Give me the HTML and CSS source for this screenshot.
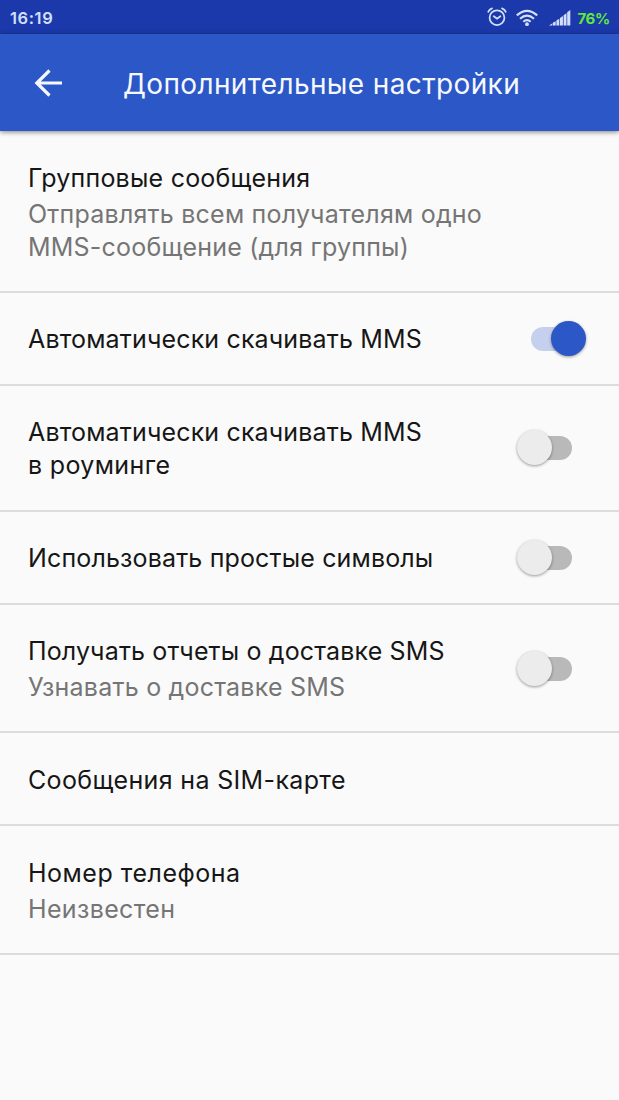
FILE: index.html
```html
<!DOCTYPE html>
<html lang="ru">
<head>
<meta charset="utf-8">
<title>Дополнительные настройки</title>
<link rel="stylesheet" href="styles.css">
</head>
<body>
<header class="statusbar">
  <span class="clock">16:19</span>
  <svg class="alarm" width="20" height="20" viewBox="0 0 20 20" fill="none" stroke="currentColor" stroke-width="1.7" stroke-linecap="round"><circle cx="10" cy="10.7" r="7.4"/><path d="M6.8 9.2l3.2 2.4 3.4-2.4M1.2 4.8Q2.3 2.3 5 1.4M18.8 4.8Q17.7 2.3 15 1.4"/></svg>
  <svg class="wifi" width="22" height="18" viewBox="0 0 22 18" fill="none" stroke="currentColor" stroke-width="2.1"><path d="M.8 6.4Q11-2.8 21.2 6.4M4 9.7Q11 3.5 18 9.7M7.3 12.8Q11 9.6 14.7 12.8"/><circle cx="11" cy="15.2" r="1.9" fill="currentColor" stroke="none"/></svg>
  <svg class="signal" width="22" height="16" viewBox="0 0 22 16" fill="currentColor"><path d="M0 15.5l3.2-2v2zM3.8 12.7l2.9-1.5v4.3H3.8zM7.4 10.4l2.9-1.7v6.8H7.4zM11 7.9l2.9-1.9v9.5H11zM14.6 5.3l2.9-2v12.2h-2.9zM18.2 2.2L21.3 0v15.5h-3.1z"/></svg>
  <span class="battery">76%</span>
</header>
<nav class="appbar">
  <svg class="back" width="28" height="28" viewBox="0 0 28 28" fill="none" stroke="currentColor" stroke-width="3.2"><path d="M28 14H3M15.5 1.5L2.8 14l12.7 12.5"/></svg>
  <h1 class="heading">Дополнительные настройки</h1>
</nav>
<main class="list">
  <section class="row"><div class="text"><p class="title">Групповые сообщения</p><p class="sub">Отправлять всем получателям одно<br>MMS-сообщение (для группы)</p></div></section>
  <section class="row"><div class="text"><p class="title tight">Автоматически скачивать MMS</p></div><span class="switch on"></span></section>
  <section class="row"><div class="text"><p class="title tight">Автоматически скачивать MMS<br><span class="wide">в роуминге</span></p></div><span class="switch"></span></section>
  <section class="row"><div class="text"><p class="title tight">Использовать простые символы</p></div><span class="switch"></span></section>
  <section class="row"><div class="text"><p class="title tight">Получать отчеты о доставке SMS</p><p class="sub">Узнавать о доставке SMS</p></div><span class="switch"></span></section>
  <section class="row"><div class="text"><p class="title wide">Сообщения на SIM-карте</p></div></section>
  <section class="row"><div class="text"><p class="title wider">Номер телефона</p><p class="sub wide">Неизвестен</p></div></section>
</main>
</body>
</html>
```
FILE: styles.css
```css
* { box-sizing: border-box; }
body { margin: 0; min-height: 1100px; background: #fafafa; font-family: Inter, Roboto, sans-serif; }
p, h1 { margin: 0; font-weight: 400; white-space: nowrap; }
.statusbar { display: flex; align-items: center; height: 34px; padding: 2px 9px 0 10px; background: #1c39ab; color: #d3e0fb; }
.clock { flex: 1; font-size: 16.5px; font-weight: 600; letter-spacing: .6px; }
.alarm { margin-right: 9px; margin-top: -3px; }
.wifi { margin-right: 11px; margin-top: -1px; }
.signal { margin-right: 6px; }
.battery { color: #5fe83c; font-size: 15px; font-weight: 700; letter-spacing: -.3px; }
.appbar { display: flex; align-items: center; height: 97px; padding: 0 34px; background: #2b57c7; color: #f5f9ff; box-shadow: 0 1px 5px rgba(0,0,0,.5); }
.back { margin-right: 61px; }
.heading { font-size: 28px; line-height: 36px; padding-top: 2px; letter-spacing: .37px; }
.row { display: flex; align-items: center; justify-content: space-between; padding: 30.5px 33px 27.4px 28px; border-bottom: 2px solid #dcdcdc; }
.title { font-size: 25px; line-height: 33px; color: #161616; letter-spacing: .22px; }
.sub { font-size: 25px; line-height: 33px; padding-top: 3px; color: #757575; letter-spacing: .22px; }
.title.tight { letter-spacing: .15px; }
.wide { letter-spacing: .35px; }
.wider { letter-spacing: .5px; }
.switch { position: relative; top: -1px; width: 41px; height: 24px; margin-right: 14px; border-radius: 12px; background: #b9b9b9; }
.switch::before { content: ""; position: absolute; left: -14px; top: -6px; width: 35px; height: 35px; border-radius: 50%; background: #ececec; box-shadow: 0 1px 3px rgba(0,0,0,.4); }
.switch.on { background: #c5d0ee; }
.switch.on::before { left: 20px; background: #2b57c7; }
```
